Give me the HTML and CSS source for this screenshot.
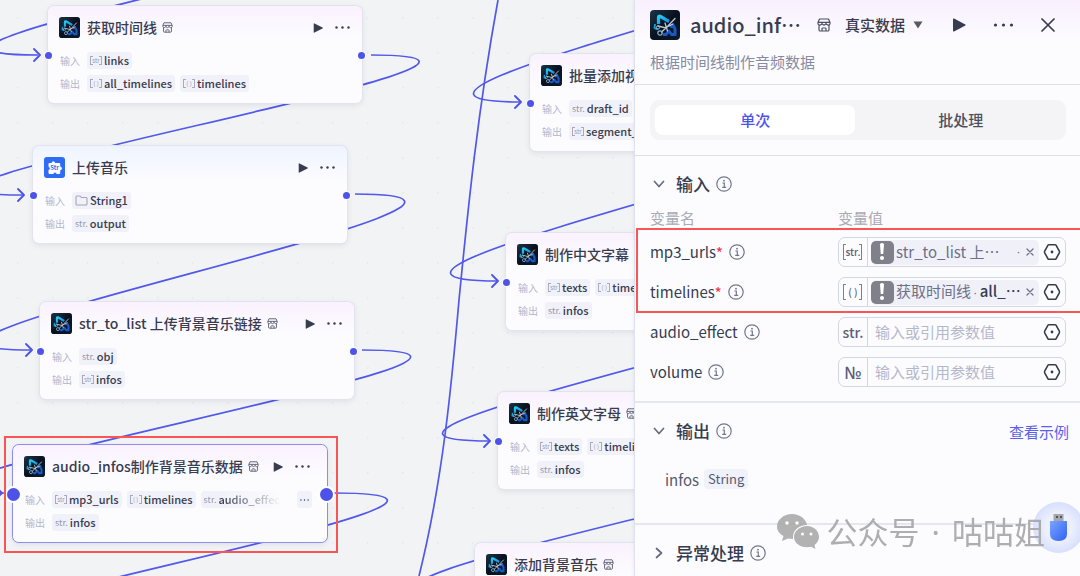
FILE: index.html
```html
<!DOCTYPE html>
<html lang="zh-CN">
<head>
<meta charset="utf-8">
<meta name="viewport" content="width=device-width, initial-scale=1">
<title>audio_infos</title>
<link rel="stylesheet" href="styles.css">
</head>
<body>
<svg class="sprite" aria-hidden="true">
  <defs>
    <linearGradient id="logo-bg" x1="0" y1="0" x2="1" y2="1"><stop offset="0" stop-color="#1d3547"/><stop offset=".5" stop-color="#08111f"/><stop offset="1" stop-color="#0d1b2b"/></linearGradient>
    <linearGradient id="logo-tri" x1="0" y1="0" x2="1" y2="1"><stop offset="0" stop-color="#1fcdf2"/><stop offset="1" stop-color="#1584e0"/></linearGradient>
    <linearGradient id="usb-body" x1="0" y1="0" x2="1" y2="1"><stop offset="0" stop-color="#7ba4ff"/><stop offset="1" stop-color="#2f62f5"/></linearGradient>
  </defs>
  <symbol id="i-logo" viewBox="0 0 30 30">
    <rect width="30" height="30" rx="4" fill="url(#logo-bg)"/>
    <path d="M8.500 14V7.500Q8.500 5.500 10.500 6.500L19 11.500" fill="none" stroke="url(#logo-tri)" stroke-width="3.200" stroke-linejoin="round"/>
    <path d="M5 14l-.5 4 3 1.500" fill="none" stroke="#1aa4dc" stroke-width="1.800" stroke-linejoin="round"/>
    <path d="M13 24.500h3l3-3.500 2.500 3.500H25V19l-2-4-3 2" fill="none" stroke="#1859c4" stroke-width="3" stroke-linejoin="round"/>
    <path d="M8 16l8 2 9-9.500M11.500 22l5.500-5 6-3M15 13l2.500 8" fill="none" stroke="#b9c8d4" stroke-width="1.300" stroke-linecap="round"/>
    <circle cx="10" cy="23" r="2.200" fill="none" stroke="#8fb2cf" stroke-width="1.200"/>
    <circle cx="8" cy="17.500" r="1.600" fill="none" stroke="#8fc3e0"/>
  </symbol>
  <symbol id="i-store" viewBox="0 0 14 14">
    <path d="M2.500 1h9L13 4.500v1a1.700 1.700 0 0 1-1.500 1.700H11L9 6 7 7.200 5 6 3 7.200h-.5A1.700 1.700 0 0 1 1 5.500v-1zM1.200 4.300h11.600M5 4.500V6M9 4.500V6M2 7.300v4.400Q2 13 3.300 13h7.400q1.300 0 1.300-1.300V7.300M5 13v-2.200q0-.8.8-.8h2.400q.8 0 .8.800V13" fill="none" stroke="currentColor" stroke-width="1.200" stroke-linejoin="round"/>
  </symbol>
  <symbol id="i-play" viewBox="0 0 14 14"><path d="M1 1.200Q1 0 2.100.600L13.300 6.400q.9.600 0 1.200L2.100 13.400q-1.100.6-1.100-.6z" fill="currentColor"/></symbol>
  <symbol id="i-dots" viewBox="0 0 20 4"><g fill="currentColor"><circle cx="2" cy="2" r="1.600"/><circle cx="10" cy="2" r="1.600"/><circle cx="18" cy="2" r="1.600"/></g></symbol>
  <symbol id="i-info" viewBox="0 0 16 16"><circle cx="8" cy="8" r="7.200" fill="none" stroke="currentColor" stroke-width="1.200"/><path d="M6.400 7H8.300v4.200M6.200 11.400h4" fill="none" stroke="currentColor" stroke-width="1.200"/><circle cx="8" cy="4.700" r=".9" fill="currentColor"/></symbol>
  <symbol id="i-down" viewBox="0 0 12 12"><path d="M1.500 3.500L6 8.500l4.500-5" fill="none" stroke="currentColor" stroke-width="1.700" stroke-linecap="round" stroke-linejoin="round"/></symbol>
  <symbol id="i-hex" viewBox="0 0 18 18"><path d="M5.900 1.700h6.200q.6 0 .9.500l3.300 6q.4.800 0 1.600l-3.300 6q-.3.500-.9.500H5.900q-.6 0-.9-.5l-3.300-6q-.4-.8 0-1.600l3.300-6q.3-.5.900-.5z" fill="none" stroke="currentColor" stroke-width="1.600"/><circle cx="9" cy="9" r="1.400" fill="currentColor"/></symbol>
  <symbol id="i-x" viewBox="0 0 14 14"><path d="M1 1l12 12M13 1L1 13" fill="none" stroke="currentColor" stroke-width="1.700" stroke-linecap="round"/></symbol>
  <symbol id="i-xs" viewBox="0 0 8 8"><path d="M1 1l6 6M7 1L1 7" fill="none" stroke="currentColor" stroke-width="1.300" stroke-linecap="round"/></symbol>
  <symbol id="i-folder" viewBox="0 0 13 11"><path d="M1 2q0-1 1-1h3l1.300 1.500H11q1 0 1 1V9q0 1-1 1H2q-1 0-1-1z" fill="none" stroke="currentColor" stroke-width="1.100"/></symbol>
  <symbol id="i-tip" viewBox="0 0 10 14"><path d="M2 1l6 6-6 6" fill="none" stroke="#4d53e8" stroke-width="1.800" stroke-linecap="round" stroke-linejoin="round"/></symbol>
</svg>

<div class="app">
<main class="canvas">
  <svg class="edges" aria-hidden="true">
    <path d="M355-85C605-85-210 55 38 55"/>
    <path d="M371 55C626 55-227 195 23 195"/>
    <path d="M355 194C611 194-218 350 31 350"/>
    <path d="M362 350C620 350-245 493 5 493"/>
    <path d="M334 493C602 493-240 632 10 632"/>
    <path d="M852-72C1102-72 271 102 521 102"/>
    <path d="M829 111C1079 111 248 281 498 281"/>
    <path d="M821 283C1071 283 240 441 490 441"/>
    <path d="M798 447C1048 447 216 592 466 592"/>
    <path d="M498 0C476 120 466 230 459 300C452 380 443 480 419 576"/>
    <use href="#i-tip" x="32" y="48" width="10" height="14"/>
    <use href="#i-tip" x="16" y="188" width="10" height="14"/>
    <use href="#i-tip" x="24" y="343" width="10" height="14"/>
    <use href="#i-tip" x="-6" y="486" width="10" height="14"/>
    <use href="#i-tip" x="513" y="95" width="10" height="14"/>
    <use href="#i-tip" x="490" y="274" width="10" height="14"/>
    <use href="#i-tip" x="482" y="434" width="10" height="14"/>
  </svg>

  <article class="node n1">
    <header class="node-head"><svg class="logo"><use href="#i-logo"/></svg><h3>获取时间线</h3><svg class="store"><use href="#i-store"/></svg><span class="grow"></span><button class="play" aria-label="运行"><svg><use href="#i-play"/></svg></button><button class="more" aria-label="更多"><svg><use href="#i-dots"/></svg></button></header>
    <div class="io"><span class="io-name">输入</span><span class="tag"><i class="arr">str</i>links</span></div>
    <div class="io"><span class="io-name">输出</span><span class="tag"><i class="arr">( )</i>all_timelines</span><span class="tag"><i class="arr">( )</i>timelines</span></div>
    <span class="port in"></span><span class="port out"></span>
  </article>

  <article class="node blue n2">
    <header class="node-head"><svg class="logo" viewBox="0 0 21 21"><rect width="21" height="21" rx="3" fill="#2f6cf6"/><path d="M5 6.500h3q-.3-1.700 1.300-1.700t1.400 1.700h5V10q1.800-.2 1.800 1.400T15.700 13v3.500h-3q0-1.500-1.700-1.500t-1.700 1.500H5V13q1.300 0 1.300-1.600T5 9.800z" fill="#fff" stroke="#fff" stroke-linejoin="round"/><text x="10.500" y="13" text-anchor="middle" class="logo-text">Str</text></svg><h3>上传音乐</h3><span class="grow"></span><button class="play" aria-label="运行"><svg><use href="#i-play"/></svg></button><button class="more" aria-label="更多"><svg><use href="#i-dots"/></svg></button></header>
    <div class="io"><span class="io-name">输入</span><span class="tag"><svg class="folder"><use href="#i-folder"/></svg>String1</span></div>
    <div class="io"><span class="io-name">输出</span><span class="tag"><i>str.</i>output</span></div>
    <span class="port in"></span><span class="port out"></span>
  </article>

  <article class="node n3">
    <header class="node-head"><svg class="logo"><use href="#i-logo"/></svg><h3>str_to_list 上传背景音乐链接</h3><svg class="store"><use href="#i-store"/></svg><span class="grow"></span><button class="play" aria-label="运行"><svg><use href="#i-play"/></svg></button><button class="more" aria-label="更多"><svg><use href="#i-dots"/></svg></button></header>
    <div class="io"><span class="io-name">输入</span><span class="tag"><i>str.</i>obj</span></div>
    <div class="io"><span class="io-name">输出</span><span class="tag"><i class="arr">str</i>infos</span></div>
    <span class="port in"></span><span class="port out"></span>
  </article>

  <article class="node selected n4">
    <header class="node-head"><svg class="logo"><use href="#i-logo"/></svg><h3>audio_infos制作背景音乐数据</h3><svg class="store"><use href="#i-store"/></svg><span class="grow"></span><button class="play" aria-label="运行"><svg><use href="#i-play"/></svg></button><button class="more" aria-label="更多"><svg><use href="#i-dots"/></svg></button></header>
    <div class="io"><span class="io-name">输入</span><span class="tag"><i class="arr">str</i>mp3_urls</span><span class="tag"><i class="arr">( )</i>timelines</span><span class="tag fade"><i>str.</i>audio_effect</span><span class="grow"></span><button class="tag rest" aria-label="更多变量"><svg><use href="#i-dots"/></svg></button></div>
    <div class="io"><span class="io-name">输出</span><span class="tag"><i>str.</i>infos</span></div>
    <span class="port in"></span><span class="port out"></span>
  </article>

  <article class="node n5">
    <header class="node-head"><svg class="logo"><use href="#i-logo"/></svg><h3>批量添加视频</h3></header>
    <div class="io"><span class="io-name">输入</span><span class="tag"><i>str.</i>draft_id</span></div>
    <div class="io"><span class="io-name">输出</span><span class="tag"><i class="arr">str</i>segment_ids</span></div>
    <span class="port in"></span>
  </article>

  <article class="node n6">
    <header class="node-head"><svg class="logo"><use href="#i-logo"/></svg><h3>制作中文字幕</h3></header>
    <div class="io"><span class="io-name">输入</span><span class="tag"><i class="arr">str</i>texts</span><span class="tag"><i class="arr">( )</i>timelines</span></div>
    <div class="io"><span class="io-name">输出</span><span class="tag"><i>str.</i>infos</span></div>
    <span class="port in"></span>
  </article>

  <article class="node n7">
    <header class="node-head"><svg class="logo"><use href="#i-logo"/></svg><h3>制作英文字母</h3><svg class="store"><use href="#i-store"/></svg></header>
    <div class="io"><span class="io-name">输入</span><span class="tag"><i class="arr">str</i>texts</span><span class="tag"><i class="arr">( )</i>timelines</span></div>
    <div class="io"><span class="io-name">输出</span><span class="tag"><i>str.</i>infos</span></div>
    <span class="port in"></span>
  </article>

  <article class="node n8">
    <header class="node-head"><svg class="logo"><use href="#i-logo"/></svg><h3>添加背景音乐</h3><svg class="store"><use href="#i-store"/></svg></header>
  </article>

  <div class="mark mark-node"></div>
</main>

<aside class="panel">
  <header class="panel-head">
    <div class="title-row">
      <svg class="panel-logo"><use href="#i-logo"/></svg>
      <h2>audio_inf…</h2>
      <svg class="panel-store"><use href="#i-store"/></svg>
      <label class="mode"><select aria-label="数据模式"><option>真实数据</option></select><svg viewBox="0 0 10 8"><path d="M.5.500h9L5 7.500z" fill="#555a66"/></svg></label>
      <span class="grow"></span>
      <button class="act-play" aria-label="运行"><svg><use href="#i-play"/></svg></button>
      <button class="act-more" aria-label="更多"><svg><use href="#i-dots"/></svg></button>
      <button class="act-close" aria-label="关闭"><svg><use href="#i-x"/></svg></button>
    </div>
    <p>根据时间线制作音频数据</p>
  </header>

  <div class="tabs-wrap"><div class="tabs" role="tablist"><button role="tab" aria-selected="true">单次</button><button role="tab" aria-selected="false">批处理</button></div></div>

  <section class="inputs">
    <div class="sec-head"><button class="toggle"><svg class="chev"><use href="#i-down"/></svg>输入</button><svg class="info"><use href="#i-info"/></svg></div>
    <div class="row cols"><span>变量名</span><span>变量值</span></div>
    <div class="rows">
      <div class="row"><span class="name">mp3_urls<b>*</b><svg class="info"><use href="#i-info"/></svg></span>
        <div class="field"><span class="type"><i class="arr">str.</i></span><span class="ref"><span class="warn"><svg viewBox="0 0 6 18"><path d="M1 1.500Q1 0 3 0t2 1.500L4.200 11H1.800z" fill="#fff"/><circle cx="3" cy="15" r="2" fill="#fff"/></svg></span><span>str_to_list 上…</span><span class="grow"></span><span class="dot">·</span><button aria-label="移除"><svg><use href="#i-xs"/></svg></button></span><button class="pick" aria-label="选择变量"><svg><use href="#i-hex"/></svg></button></div></div>
      <div class="row"><span class="name">timelines<b>*</b><svg class="info"><use href="#i-info"/></svg></span>
        <div class="field"><span class="type"><i class="arr">( )</i></span><span class="ref"><span class="warn"><svg viewBox="0 0 6 18"><path d="M1 1.500Q1 0 3 0t2 1.500L4.200 11H1.800z" fill="#fff"/><circle cx="3" cy="15" r="2" fill="#fff"/></svg></span><span>获取时间线<span class="dot"> · </span><strong>all_…</strong></span><button aria-label="移除"><svg><use href="#i-xs"/></svg></button></span><button class="pick" aria-label="选择变量"><svg><use href="#i-hex"/></svg></button></div></div>
      <div class="row"><label class="name" for="effect">audio_effect<svg class="info"><use href="#i-info"/></svg></label>
        <div class="field"><span class="type">str.</span><input id="effect" placeholder="输入或引用参数值"><button class="pick" aria-label="选择变量"><svg><use href="#i-hex"/></svg></button></div></div>
      <div class="row"><label class="name" for="volume">volume<svg class="info"><use href="#i-info"/></svg></label>
        <div class="field"><span class="type num">№</span><input id="volume" placeholder="输入或引用参数值"><button class="pick" aria-label="选择变量"><svg><use href="#i-hex"/></svg></button></div></div>
      <div class="mark mark-rows"></div>
    </div>
  </section>

  <section class="outputs">
    <div class="sec-head"><button class="toggle"><svg class="chev"><use href="#i-down"/></svg>输出</button><svg class="info"><use href="#i-info"/></svg><span class="grow"></span><a href="#">查看示例</a></div>
    <div class="out-var">infos<span>String</span></div>
  </section>

  <section class="errors">
    <div class="sec-head"><button class="toggle"><svg class="chev closed"><use href="#i-down"/></svg>异常处理</button><svg class="info"><use href="#i-info"/></svg></div>
  </section>

  <button class="helper" aria-label="助手"><svg viewBox="0 0 20 30"><rect x="4.500" y="1" width="10" height="8" fill="#a5a7ae"/><path d="M7 3h2v2H7zM11 3h2v2h-2z" fill="#555"/><path d="M1 8h17v13q0 7-8.500 7T1 21z" fill="url(#usb-body)"/></svg></button>
  <div class="watermark"><svg viewBox="0 0 43 35"><path d="M15 0c8 0 14 5 15 11-8 0-14 5-14 12v2l-5-.5L5 27l1.500-5C3 20 0 17 0 12.500 0 5.500 7 0 15 0z" fill="#aaaaab"/><path d="M30 12c7 0 12 5 12 11 0 3.500-2 6-4.500 8l1 4-4.500-2.300c-9 2-17-2.700-17-9.700 0-6 6-11 13-11z" fill="#aaaaab"/><g fill="#fff"><circle cx="10" cy="9" r="1.800"/><circle cx="20" cy="9" r="1.800"/><circle cx="25.500" cy="20" r="1.500"/><circle cx="34" cy="20" r="1.500"/></g></svg><span>公众号<span class="dot"> · </span>咕咕姐</span></div>
</aside>
</div>
</body>
</html>
```
FILE: styles.css
```css
* { box-sizing: border-box; }
body { margin: 0; font-family: "Noto Sans CJK SC", "Noto Sans", sans-serif; color: #383c4f; background: #f1f3f5; }
button, input, select { font: inherit; color: inherit; border: 0; background: none; padding: 0; margin: 0; }
button { display: inline-flex; align-items: center; justify-content: center; cursor: pointer; }
h2, h3, p { margin: 0; font-weight: 500; }
i { font-style: normal; }
svg { flex: none; display: block; }
.sprite { position: absolute; width: 0; height: 0; }
.grow { flex: 1; }
.dot { font-family: "Noto Sans", sans-serif; }

.app { display: grid; grid-template-columns: minmax(0, 1fr) minmax(400px, 41.3%); min-height: 100vh; overflow: hidden; }

.canvas {
  position: relative; overflow: hidden; background-color: #f1f3f5;
  background-image: radial-gradient(circle, #e7eaee 1px, transparent 1px);
  background-size: 35px 35px;
}
.edges { position: absolute; inset: 0; width: 100%; height: 100%; }
.edges path { fill: none; stroke: #5158ea; stroke-width: 1.7; }

.node {
  position: absolute; width: 314px; padding: 11px 12px 11px 11px; display: grid; gap: 6px;
  border-radius: 6px; background: linear-gradient(#faf2fe, #fcfcff 34px);
  box-shadow: 0 0 0 1px #e2e3ef, 0 2px 6px rgba(40, 45, 80, .1);
}
.node.blue { background: linear-gradient(#eef4ff, #fcfcff 34px); }
.node.selected { box-shadow: 0 0 0 1px #8e8cf0, 0 2px 6px rgba(40, 45, 80, .1); }
.n1 { left: 48px; top: 6px; }
.n2 { left: 33px; top: 146px; }
.n3 { left: 40px; top: 302px; }
.n4 { left: 13px; top: 445px; }
.n5 { left: 530px; top: 54px; }
.n6 { left: 506px; top: 233px; }
.n7 { left: 498px; top: 392px; }
.n8 { left: 475px; top: 543px; }
.node-head { display: flex; align-items: center; height: 21px; margin-bottom: 8px; }
.node-head h3 { margin-left: 7px; padding-bottom: 2px; font-size: 14px; line-height: 20px; white-space: nowrap; }
.logo { width: 21px; height: 21px; }
.logo-text { font-size: 6px; font-weight: 700; fill: #2f6cf6; }
.store { width: 11px; height: 11px; margin-left: 5px; color: #5d6175; }
.play svg { width: 10px; height: 10px; }
.more { margin-left: 12px; }
.more svg { width: 15px; height: 3px; }
.selected .more { margin-right: 6px; }

.io { display: flex; align-items: center; gap: 5px; height: 17px; padding-left: 1px; }
.io-name { width: 22px; font-size: 10px; line-height: 16px; color: #b3b6cb; white-space: nowrap; }
.tag {
  display: inline-flex; align-items: center; gap: 2px; height: 17px; padding: 0 3px; border-radius: 3px;
  background: #f1f1f9; font-size: 11px; line-height: 17px; font-weight: 500; white-space: nowrap;
}
.tag i { font-size: 9px; font-weight: 400; color: #9598ad; }
.arr { position: relative; display: inline-flex; align-items: center; justify-content: center; }
.tag .arr { width: 12px; height: 9px; font-size: 6px; line-height: 9px; }
.arr::before, .arr::after { content: ""; position: absolute; top: 0; bottom: 0; width: 2px; border: 1px solid currentColor; opacity: .8; }
.arr::before { left: 0; border-right: 0; }
.arr::after { right: 0; border-left: 0; }
.folder { width: 13px; height: 11px; color: #a3a6ba; }
.fade { -webkit-mask-image: linear-gradient(90deg, #000 25%, transparent 94%); mask-image: linear-gradient(90deg, #000 25%, transparent 94%); }
.rest { margin-right: 4px; }
.rest svg { width: 9px; height: 2px; }
.port { position: absolute; top: 46px; width: 7px; height: 7px; border-radius: 50%; background: #4d53e8; box-shadow: 0 0 0 1px #fcfcff; }
.in { left: -3px; }
.out { right: -3px; }
.selected .port { top: 43px; width: 13px; height: 13px; box-shadow: 0 0 0 2px #fff; }
.selected .in { left: -6px; }
.selected .out { right: -6px; }

.mark { position: absolute; border: 2px solid #fb5454; pointer-events: none; }
.mark-node { left: 4px; top: 436px; width: 334px; height: 117px; }

.panel { position: relative; background: #fcfcff; border-left: 1px solid #e0e1ee; box-shadow: -1px 0 3px rgba(40, 45, 80, .06); }
.panel-head { padding: 10px 14px 9px 15px; border-bottom: 1px solid #dcdeec; background: linear-gradient(#f9f0fe, #fcfcff 44px); }
.title-row { display: flex; align-items: center; height: 30px; }
.panel-logo { width: 30px; height: 30px; }
.panel-head h2 { margin-left: 10px; font-size: 20px; line-height: 28px; white-space: nowrap; }
.panel-store { width: 14px; height: 14px; margin-left: 16px; color: #4a4e61; }
.mode { display: flex; align-items: center; margin-left: 14px; }
.mode select { appearance: none; font-size: 15px; line-height: 24px; font-weight: 500; }
.mode svg { width: 10px; height: 8px; margin-left: 7px; }
.act-play svg { width: 14px; height: 14px; }
.act-more { margin-left: 27px; }
.act-more svg { width: 21px; height: 4px; }
.act-close { margin: 0 11px 0 27px; }
.act-close svg { width: 14px; height: 14px; }
.panel-head p { margin-top: 10px; padding-bottom: 1px; font-size: 15px; line-height: 24px; font-weight: 400; color: #878ba1; }

.tabs-wrap { padding: 15px 14px 15px 15px; border-bottom: 1px solid #dcdeec; }
.tabs { display: grid; grid-template-columns: 1fr 1fr; gap: 5px; padding: 5px; border-radius: 9px; background: #f4f4f7; }
.tabs button { height: 30px; padding-bottom: 2px; border-radius: 8px; font-size: 15px; font-weight: 500; color: #4d5061; }
.tabs button[aria-selected="true"] { background: #fff; color: #4d53e8; }

.inputs { padding: 15px 14px 14px 15px; border-bottom: 2px solid #e4e6f0; }
.sec-head { display: flex; align-items: center; height: 26px; }
.toggle { font-size: 17px; line-height: 26px; font-weight: 500; }
.chev { width: 12px; height: 12px; margin: 0 11px 0 3px; color: #666b80; }
.closed { transform: rotate(-90deg); }
.info { width: 16px; height: 16px; margin-left: 6px; color: #71768c; }
.row { display: grid; grid-template-columns: 188px minmax(0, 1fr); align-items: center; }
.cols { margin-top: 9px; font-size: 15px; line-height: 24px; color: #a9aab3; }
.rows { position: relative; display: grid; gap: 10px; margin-top: 7px; }
.name { display: flex; align-items: center; font-size: 15px; line-height: 24px; padding-bottom: 1px; }
.name b { font-size: 14px; font-weight: 500; color: #f5384b; }
.field { display: flex; align-items: center; height: 30px; border: 1px solid #d3d6e8; border-radius: 7px; }
.type { flex: none; width: 29px; height: 28px; border-right: 1px solid #d3d6e8; display: flex; align-items: center; justify-content: center; font-size: 14px; font-weight: 500; color: #5b6077; }
.type.num { font-family: "Noto Sans", sans-serif; font-size: 17px; }
.type .arr { width: 19px; height: 16px; font-size: 10px; line-height: 16px; }
.field input { flex: 1; min-width: 0; height: 28px; padding: 0 0 2px 7px; font-size: 15px; outline: 0; }
.field input::placeholder { color: #b5b8cb; opacity: 1; }
.ref { flex: 1; min-width: 0; display: flex; align-items: center; gap: 2px; height: 25px; margin-left: 3px; padding-right: 5px; border-radius: 5px; background: #f0f0f9; font-size: 15px; line-height: 24px; color: #6d7187; white-space: nowrap; overflow: hidden; }
.ref strong { font-weight: 500; color: #383c4f; }
.ref .dot { font-size: 11px; }
.ref button { margin-left: auto; }
.ref .dot + button { margin-left: 4px; }
.ref button svg { width: 8px; height: 8px; }
.warn { flex: none; display: flex; align-items: center; justify-content: center; width: 23px; height: 23px; border-radius: 5px; background: #80808a; }
.warn svg { width: 6px; height: 18px; }
.pick { margin: 0 4px; }
.pick svg { width: 18px; height: 18px; }
.mark-rows { left: -14px; right: -16px; top: -9px; height: 85px; }

.outputs { padding: 15px 11px 32px 15px; border-bottom: 2px solid #e4e6f0; }
.outputs a { font-size: 15px; color: #5a60ee; text-decoration: none; }
.out-var { display: flex; align-items: center; gap: 5px; height: 24px; margin-top: 23px; padding-left: 15px; font-size: 15px; color: #555a70; }
.out-var span { height: 20px; padding: 0 4px; border-radius: 4px; background: #f1f1f9; font-size: 13px; line-height: 20px; }
.errors { padding: 15px; }

.watermark { position: absolute; right: 35px; top: 509px; display: flex; align-items: center; gap: 7px; font-size: 31px; line-height: 44px; color: #a6a6a8; white-space: nowrap; opacity: .9; }
.watermark svg { width: 43px; height: 35px; }
.watermark .dot { padding: 0 4px; }
.helper { position: absolute; right: -4px; top: 502px; width: 51px; height: 51px; border-radius: 50%; background: radial-gradient(circle, #eef0fd 35%, #c3d2fd); }
.helper svg { width: 20px; height: 30px; }
```
